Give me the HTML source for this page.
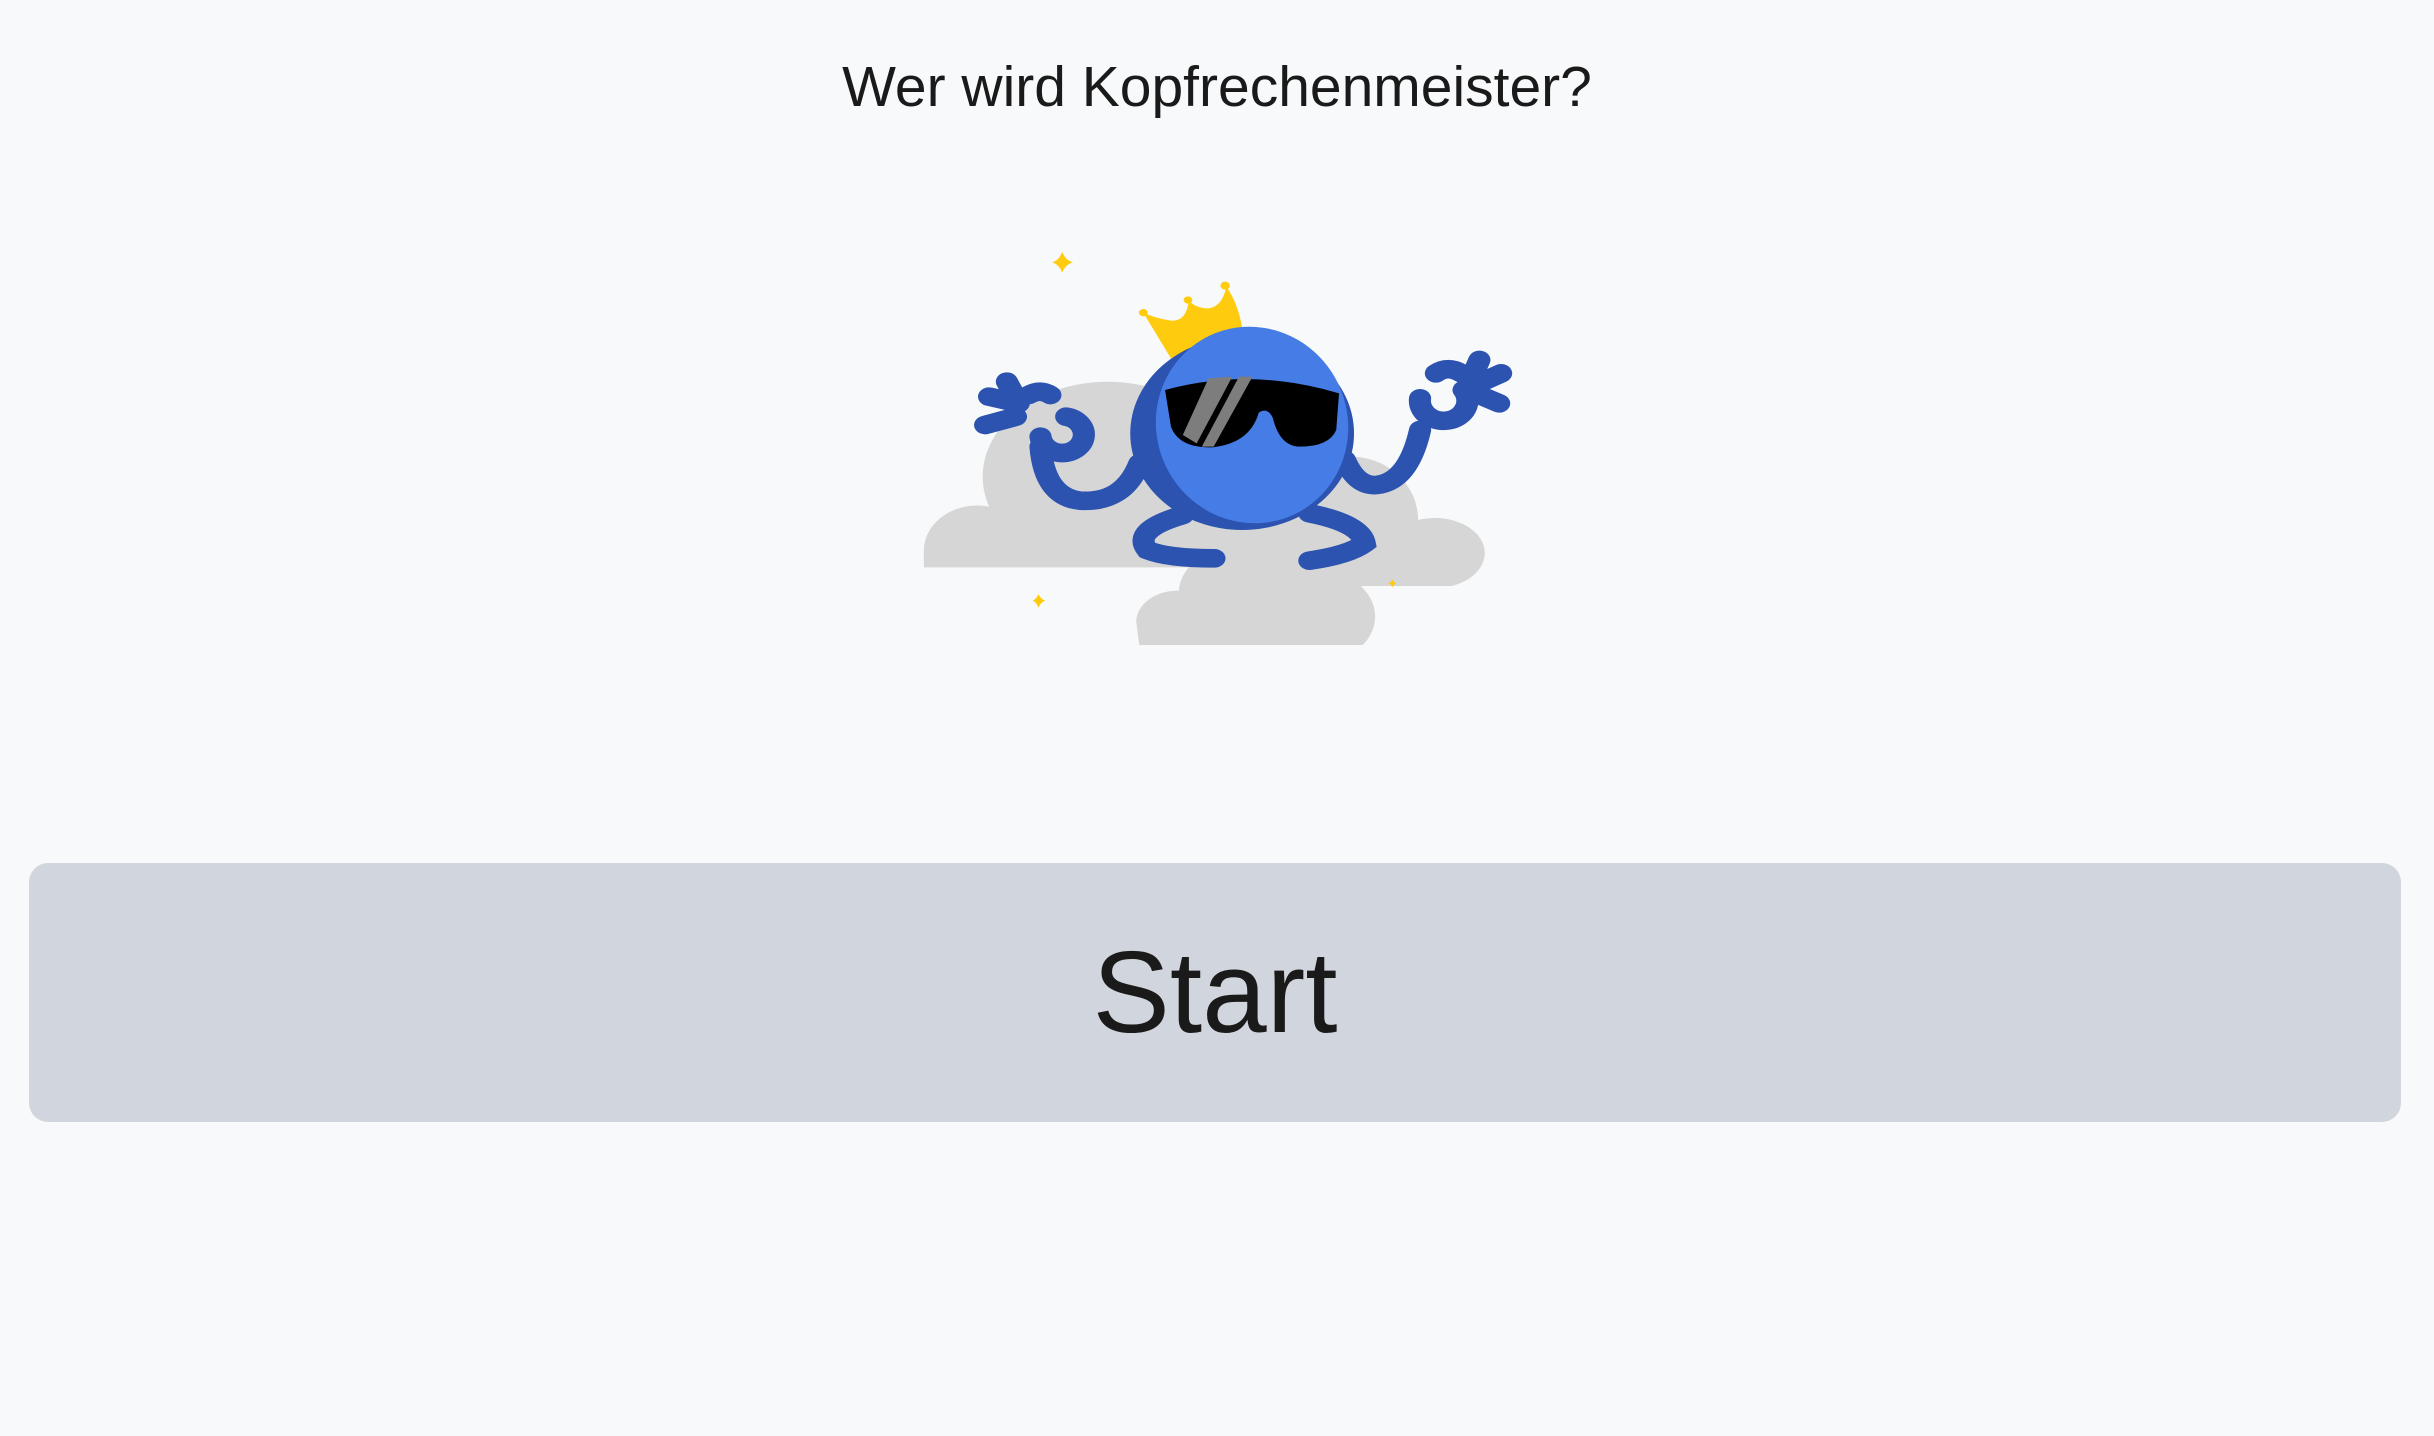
<!DOCTYPE html>
<html><head><meta charset="utf-8"><style>
html,body{margin:0;padding:0;background:#f8f9fa;width:2434px;height:1436px;overflow:hidden;font-family:"Liberation Sans",sans-serif;}
.title{position:absolute;left:0;width:2434px;top:52px;text-align:center;font-size:57px;line-height:70px;color:#1a1a1a;}
.btn{position:absolute;left:29px;top:863px;width:2372px;height:259px;background:#d1d5dd;border-radius:19px;text-align:center;line-height:259px;font-size:116px;color:#1a1a1a;}
svg{position:absolute;left:910px;top:230px;}
</style></head><body>
<div class="title">Wer wird Kopfrechenmeister?</div>
<svg width="620" height="430" viewBox="0 0 1568 1290" preserveAspectRatio="none">
 <g fill="#d6d6d6">
  <path d="M35 1012 L35 960 A135 135 0 0 1 200 830 A300 270 0 0 1 800 650 L1000 1012 Z"/>
  <path d="M900 1068 L900 800 Q1000 680 1120 680 A170 190 0 0 1 1285 870 A120 100 0 0 1 1370 1068 Z"/>
  <path d="M580 1245 L572 1175 A105 95 0 0 1 680 1082 A190 150 0 0 1 1040 1020 A150 140 0 0 1 1145 1245 Z"/>
 </g>
 <g fill="#ffcb0e">
  <path d="M385 65 Q392 90 412 97 Q392 104 385 128 Q378 104 360 97 Q378 90 385 65Z"/>
  <path d="M325 1092 Q330 1107 342 1112 Q330 1117 325 1133 Q320 1117 310 1112 Q320 1107 325 1092Z"/>
  <path d="M1220 1048 Q1223 1057 1230 1060 Q1223 1063 1220 1072 Q1217 1063 1210 1060 Q1217 1057 1220 1048Z"/>
  <path d="M590 248 L660 385 L840 295 Q830 220 800 170 Q790 230 755 235 Q720 235 705 210 Q700 275 660 272 Q620 265 590 248Z"/>
  <circle cx="590" cy="248" r="11"/><circle cx="703" cy="210" r="11"/><circle cx="797" cy="167" r="12"/>
 </g>
 <g fill="none" stroke="#2c53b0" stroke-width="56" stroke-linecap="round">
  <path d="M580 700 Q540 820 430 812 Q340 800 330 650"/>
  <path d="M330 620 A55 55 0 1 0 395 560"/>
  <path d="M275 520 L200 500 M268 560 L190 585 M270 510 L245 455 M300 495 Q330 475 355 495"/>
  <path d="M1100 690 Q1130 770 1180 765 Q1260 755 1290 600"/>
  <path d="M1290 505 A60 60 0 1 0 1400 480"/>
  <path d="M1330 430 Q1360 405 1395 430 M1410 470 L1440 390 M1420 470 L1495 430 M1420 485 L1490 520"/>
  <path d="M690 855 Q560 900 600 960 Q650 985 770 985"/>
  <path d="M1010 850 Q1140 880 1150 940 Q1110 975 1010 992"/>
 </g>
 <ellipse cx="840" cy="610" rx="283" ry="290" fill="#2c53b0"/>
 <ellipse cx="865" cy="585" rx="243" ry="295" fill="#457ce6" transform="rotate(-4 865 585)"/>
 <path d="M645 480 Q860 410 1085 490 L1078 600 Q1060 650 985 650 Q935 648 918 565 Q905 530 882 548 Q860 640 765 652 Q680 655 660 590 Z" fill="#000"/>
 <polygon points="755,445 815,440 725,640 690,615" fill="#7d7d7d"/>
 <polygon points="832,440 866,440 768,650 738,650" fill="#7d7d7d"/>
</svg>
<div class="btn">Start</div>
</body></html>
